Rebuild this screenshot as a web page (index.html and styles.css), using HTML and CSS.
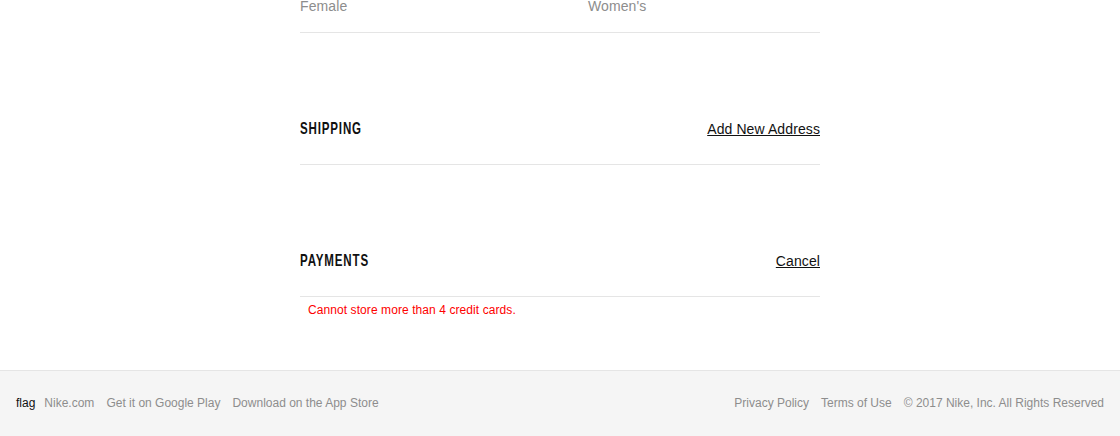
FILE: index.html
```html
<!DOCTYPE html>
<html lang="en">
<head>
<meta charset="utf-8">
<title>Settings</title>
<link rel="stylesheet" href="styles.css">
</head>
<body>
<main class="content">
  <div class="gender-row">
    <span class="value">Female</span>
    <span class="value">Women's</span>
  </div>
  <section class="section">
    <div class="section-head">
      <h2 class="section-title">SHIPPING</h2>
      <a class="section-link" href="#">Add New Address</a>
    </div>
  </section>
  <section class="section">
    <div class="section-head">
      <h2 class="section-title">PAYMENTS</h2>
      <a class="section-link" href="#">Cancel</a>
    </div>
  </section>
  <p class="error">Cannot store more than 4 credit cards.</p>
</main>
<footer class="footer">
  <nav class="footer-left">
    <span class="flag">flag</span>
    <a class="footer-link" href="#">Nike.com</a>
    <a class="footer-link" href="#">Get it on Google Play</a>
    <a class="footer-link" href="#">Download on the App Store</a>
  </nav>
  <nav class="footer-right">
    <a class="footer-link" href="#">Privacy Policy</a>
    <a class="footer-link" href="#">Terms of Use</a>
    <span class="footer-link">© 2017 Nike, Inc. All Rights Reserved</span>
  </nav>
</footer>
</body>
</html>
```
FILE: styles.css
```css
* { box-sizing: border-box; }
html, body { margin: 0; padding: 0; }
body {
  font-family: "Liberation Sans", Arial, sans-serif;
  color: #111;
  background: #fff;
  height: 436px;
  overflow: hidden;
}
.content {
  width: 520px;
  margin: 0 auto;
}
.gender-row {
  display: grid;
  grid-template-columns: 288px 1fr;
  margin-top: -4px;
  padding-bottom: 16px;
  border-bottom: 1px solid #e5e5e5;
}
.value {
  font-size: 14px;
  line-height: 20px;
  color: #8d8d8d;
  letter-spacing: 0.1px;
}
.section {
  padding-top: 85px;
  padding-bottom: 26px;
  border-bottom: 1px solid #e5e5e5;
}
.section-head {
  display: flex;
  justify-content: space-between;
  align-items: baseline;
  height: 20px;
}
.section-title {
  display: inline-block;
  margin: 0;
  font-family: "Liberation Sans", sans-serif;
  font-weight: bold;
  font-size: 16.5px;
  line-height: 20px;
  letter-spacing: 1.2px;
  color: #111;
  transform: scaleX(0.7);
  transform-origin: left center;
}
.section-link {
  font-size: 14px;
  line-height: 20px;
  color: #111;
  text-decoration: underline;
  letter-spacing: 0.1px;
}
.error {
  margin: 0;
  padding: 5px 0 0 8px;
  font-size: 12px;
  line-height: 16px;
  color: #fe0000;
  letter-spacing: 0.08px;
}
.footer {
  margin-top: 52px;
  height: 66px;
  border-top: 1px solid #e5e5e5;
  background: #f5f5f5;
  padding: 0 16px 1px;
  display: flex;
  justify-content: space-between;
  align-items: center;
  font-size: 12px;
  line-height: 16px;
}
.footer-left, .footer-right {
  display: flex;
  gap: 12px;
  align-items: baseline;
}
.flag {
  color: #111;
  margin-right: -3px;
}
.footer-link {
  color: #8d8d8d;
  text-decoration: none;
}
```
